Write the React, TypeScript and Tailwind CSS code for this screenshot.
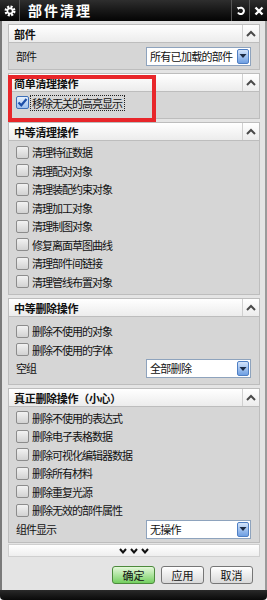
import type { ReactNode } from 'react';

const FONT = { fontFamily: '"Noto Sans CJK SC", "Noto Sans", sans-serif' };

function ChevronUp() {
  return (
    <svg width="10" height="7" viewBox="0 0 10 7">
      <path d="M1 6 L5 2 L9 6" fill="none" stroke="#4a4a4a" strokeWidth="2" />
    </svg>
  );
}

function Header({ title }: { title: string }) {
  return (
    <div className="flex h-[19px] border border-[#bdbdbd] bg-gradient-to-b from-[#ffffff] to-[#ececec]">
      <div className="flex-1 whitespace-nowrap pl-[5px] text-[11px] font-bold leading-[18px] tracking-[-0.3px] text-[#111]">
        {title}
      </div>
      <div className="flex w-[17px] items-center justify-center border-l border-[#d0d0d0]">
        <ChevronUp />
      </div>
    </div>
  );
}

function Section({ title, children, className = '' }: { title: string; children: ReactNode; className?: string }) {
  return (
    <div className="flex flex-col">
      <Header title={title} />
      <div className={`border-x border-b border-[#bdbdbd] bg-[#d6d6d6] ${className}`}>{children}</div>
    </div>
  );
}

function Box({ checked = false }: { checked?: boolean }) {
  if (checked) {
    return (
      <div className="flex h-[13px] w-[13px] items-center justify-center rounded-[2px] border border-[#3d6fb8] bg-gradient-to-b from-[#e8f1fc] to-[#9cc0ee]">
        <svg width="11" height="11" viewBox="0 0 11 11">
          <path d="M1.5 5.5 L4.3 8.3 L9.5 2" fill="none" stroke="#1d4fa8" strokeWidth="2.2" />
        </svg>
      </div>
    );
  }
  return (
    <div className="h-[13px] w-[13px] rounded-[2px] border border-[#8c8c8c] bg-gradient-to-b from-[#f2f2f2] to-[#d2d2d2]" />
  );
}

function Check({ label, checked = false, focus = false }: { label: string; checked?: boolean; focus?: boolean }) {
  return (
    <div className="flex h-[18.5px] items-center pl-[7px]">
      <Box checked={checked} />
      <span
        className={`ml-[1px] whitespace-nowrap text-[11px] leading-[14px] tracking-[-1px] text-[#111] ${
          focus ? 'border border-dotted border-[#222] pl-[1px] pr-[2px]' : 'px-[2px]'
        }`}
      >
        {label}
      </span>
    </div>
  );
}

function Select({ value }: { value: string }) {
  return (
    <div className="flex h-[19px] w-[105px] items-center border border-[#8ea3bd] bg-white">
      <span className="flex-1 whitespace-nowrap pl-[3px] text-[11px] leading-[15px] tracking-[-0.7px] text-[#111]">{value}</span>
      <div className="mr-[1px] flex h-[15px] w-[12px] items-center justify-center rounded-[2px] border border-[#4f7fc4] bg-gradient-to-b from-[#d4e4fa] to-[#6e9fe2]">
        <svg width="8" height="6" viewBox="0 0 8 6">
          <path d="M0.5 1 L7.5 1 L4 5 Z" fill="#1c2b45" />
        </svg>
      </div>
    </div>
  );
}

function Row({ label, value }: { label: string; value: string }) {
  return (
    <div className="flex h-[19px] items-center justify-between pl-[7px] pr-[8px]">
      <span className="whitespace-nowrap text-[11px] tracking-[-1px] text-[#111]">{label}</span>
      <Select value={value} />
    </div>
  );
}

function Btn({ label, primary = false }: { label: string; primary?: boolean }) {
  return (
    <div
      className={`flex h-[18px] w-[43px] items-center justify-center rounded-[3px] border text-[11px] text-[#111] ${
        primary
          ? 'border-[#4c8a3c] bg-gradient-to-b from-[#e4f8da] to-[#72cf5e]'
          : 'border-[#767676] bg-gradient-to-b from-[#ffffff] to-[#d9d9d9]'
      }`}
    >
      {label}
    </div>
  );
}

export default function App() {
  return (
    <div className="h-[600px] w-[267px] overflow-hidden bg-white" style={FONT}>
      <div className="relative flex h-full flex-col overflow-hidden rounded-b-[4px]">
        {/* title bar */}
        <div className="flex h-[21px] items-stretch bg-gradient-to-b from-[#2e2e2e] to-[#050505]">
          <div className="flex w-[20px] items-center justify-center border-r border-[#555]">
            <svg width="12" height="12" viewBox="0 0 12 12">
              <circle cx="6" cy="6" r="4.2" fill="none" stroke="#fff" strokeWidth="2.6" strokeDasharray="2 1.3" />
              <circle cx="6" cy="6" r="2.6" fill="none" stroke="#fff" strokeWidth="1.6" />
            </svg>
          </div>
          <div className="flex-1 pl-[8px] text-[14px] font-bold leading-[21px] tracking-[2px] text-white">部件清理</div>
          <div className="flex w-[18px] items-center justify-center border-l border-[#555]">
            <svg width="10" height="10" viewBox="0 0 10 10">
              <path d="M2 6.5 A3.2 3.2 0 1 0 3 2.2" fill="none" stroke="#fff" strokeWidth="2" />
              <path d="M0.8 1 L4.2 1.2 L2.4 4 Z" fill="#fff" />
            </svg>
          </div>
          <div className="flex w-[18px] items-center justify-center border-l border-[#555]">
            <svg width="10" height="10" viewBox="0 0 10 10">
              <path d="M1.5 1.5 L8.5 8.5 M8.5 1.5 L1.5 8.5" stroke="#fff" strokeWidth="2.4" />
            </svg>
          </div>
        </div>

        {/* body */}
        <div className="flex flex-1 flex-col border-l-2 border-r-2 border-l-[#7a7a7a] border-r-[#9a9a9a] bg-[#e4e4e4] pl-[6px] pr-[5px] pt-[3px]">
          <div className="flex flex-col gap-[3px]">
            <Section title="部件" className="h-[27px] pt-[3.5px]">
              <Row label="部件" value="所有已加载的部件" />
            </Section>

            <Section title="简单清理操作" className="h-[27px] pt-[1.5px]">
              <Check label="移除无关的高亮显示" checked focus />
            </Section>

            <Section title="中等清理操作" className="h-[154px] pt-[2px]">
              {['清理特征数据', '清理配对对象', '清理装配约束对象', '清理加工对象', '清理制图对象', '修复离面草图曲线', '清理部件间链接', '清理管线布置对象'].map(
                (t) => (
                  <Check key={t} label={t} />
                )
              )}
            </Section>

            <Section title="中等删除操作" className="h-[68px] pt-[5px]">
              <Check label="删除不使用的对象" />
              <Check label="删除不使用的字体" />
              <Row label="空组" value="全部删除" />
            </Section>

            <Section title="真正删除操作（小心）" className="h-[136px] pt-[1.5px]">
              {['删除不使用的表达式', '删除电子表格数据', '删除可视化编辑器数据', '删除所有材料', '删除重复光源', '删除无效的部件属性'].map((t) => (
                <Check key={t} label={t} />
              ))}
              <Row label="组件显示" value="无操作" />
            </Section>
          </div>

          {/* expand bar */}
          <div className="mt-[1px] flex h-[13px] items-center justify-center gap-[3px] border border-[#cfcfcf] bg-gradient-to-b from-[#ffffff] to-[#eeeeee]">
            {[0, 1, 2].map((i) => (
              <svg key={i} width="8" height="6" viewBox="0 0 8 6">
                <path d="M1 1 L4 4.5 L7 1" fill="none" stroke="#111" strokeWidth="2" />
              </svg>
            ))}
          </div>

          {/* buttons */}
          <div className="flex flex-1 items-start justify-end gap-[6px] pr-[7px] pt-[9px]">
            <Btn label="确定" primary />
            <Btn label="应用" />
            <Btn label="取消" />
          </div>
        </div>

        <div className="h-[10px] bg-gradient-to-b from-[#2a2a2a] to-[#0a0a0a]" />

        {/* annotation highlight */}
        <div className="pointer-events-none absolute left-[8px] top-[75px] h-[47px] w-[148px] border-[4px] border-[#e8262a]" />
      </div>
    </div>
  );
}
